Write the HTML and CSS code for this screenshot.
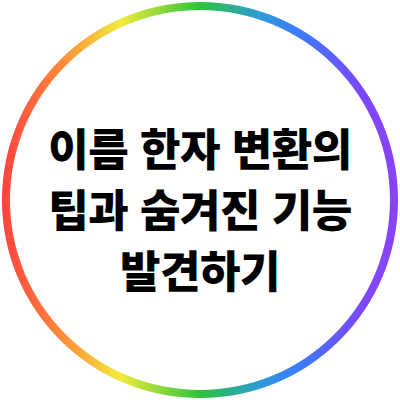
FILE: index.html
```html
<!DOCTYPE html>
<html lang="ko">
<head>
<meta charset="utf-8">
<link rel="stylesheet" href="styles.css">
</head>
<body>
<div class="page">
  <div class="ring">
    <div class="disc">
      <h1 class="title">이름 한자 변환의<br>팁과 숨겨진 기능<br>발견하기</h1>
    </div>
  </div>
</div>
</body>
</html>
```
FILE: styles.css
```css
html, body {
  margin: 0;
  padding: 0;
  background: #ffffff;
}
.page {
  width: 400px;
  height: 400px;
  padding: 2px;
  box-sizing: border-box;
}
.ring {
  width: 396px;
  height: 396px;
  border-radius: 50%;
  padding: 8px;
  box-sizing: border-box;
  background: linear-gradient(90deg, #ff4040 0%, #ff8a3a 15%, #f0ec3a 30%, #2cc43a 50%, #2f9ad8 65%, #3a7cff 75%, #7a48ff 90%, #8c42f5 100%);
}
.disc {
  width: 100%;
  height: 100%;
  border-radius: 50%;
  background: #ffffff;
  display: flex;
  align-items: center;
  justify-content: center;
  padding-top: 16px;
  box-sizing: border-box;
}
.title {
  margin: 0;
  font-family: "Noto Sans CJK KR", "Noto Sans", sans-serif;
  font-weight: 900;
  font-size: 44px;
  line-height: 61px;
  color: #000000;
  text-align: center;
  letter-spacing: -0.5px;
}
```
